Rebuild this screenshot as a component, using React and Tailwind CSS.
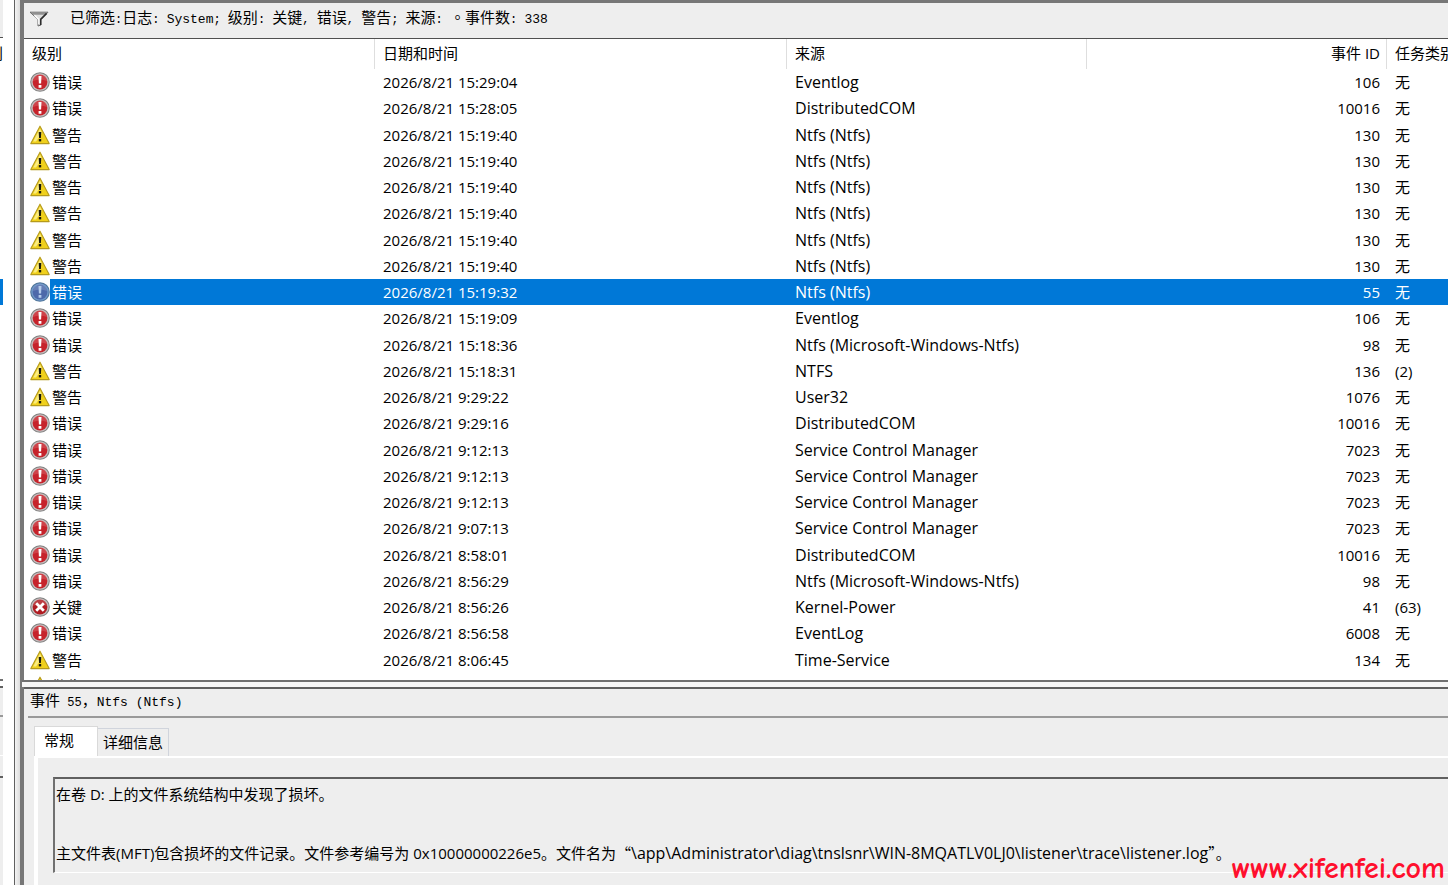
import React, { useState } from 'react';

const EVENTS = [
    ['error', '2026/8/21 15:29:04', 'Eventlog', '106', '无'],
    ['error', '2026/8/21 15:28:05', 'DistributedCOM', '10016', '无'],
    ['warning', '2026/8/21 15:19:40', 'Ntfs (Ntfs)', '130', '无'],
    ['warning', '2026/8/21 15:19:40', 'Ntfs (Ntfs)', '130', '无'],
    ['warning', '2026/8/21 15:19:40', 'Ntfs (Ntfs)', '130', '无'],
    ['warning', '2026/8/21 15:19:40', 'Ntfs (Ntfs)', '130', '无'],
    ['warning', '2026/8/21 15:19:40', 'Ntfs (Ntfs)', '130', '无'],
    ['warning', '2026/8/21 15:19:40', 'Ntfs (Ntfs)', '130', '无'],
    ['error', '2026/8/21 15:19:32', 'Ntfs (Ntfs)', '55', '无'],
    ['error', '2026/8/21 15:19:09', 'Eventlog', '106', '无'],
    ['error', '2026/8/21 15:18:36', 'Ntfs (Microsoft-Windows-Ntfs)', '98', '无'],
    ['warning', '2026/8/21 15:18:31', 'NTFS', '136', '(2)'],
    ['warning', '2026/8/21 9:29:22', 'User32', '1076', '无'],
    ['error', '2026/8/21 9:29:16', 'DistributedCOM', '10016', '无'],
    ['error', '2026/8/21 9:12:13', 'Service Control Manager', '7023', '无'],
    ['error', '2026/8/21 9:12:13', 'Service Control Manager', '7023', '无'],
    ['error', '2026/8/21 9:12:13', 'Service Control Manager', '7023', '无'],
    ['error', '2026/8/21 9:07:13', 'Service Control Manager', '7023', '无'],
    ['error', '2026/8/21 8:58:01', 'DistributedCOM', '10016', '无'],
    ['error', '2026/8/21 8:56:29', 'Ntfs (Microsoft-Windows-Ntfs)', '98', '无'],
    ['critical', '2026/8/21 8:56:26', 'Kernel-Power', '41', '(63)'],
    ['error', '2026/8/21 8:56:58', 'EventLog', '6008', '无'],
    ['warning', '2026/8/21 8:06:45', 'Time-Service', '134', '无'],
    ['warning', '2026/8/21 8:06:42', 'Time-Service', '134', '无'],
];

const LEVELS = { error: '错误', warning: '警告', critical: '关键' };

function LevelIcon({ level, selected }) {
    if (level === 'warning') {
        return (
            <svg viewBox="0 0 20 20" className="block size-5" aria-hidden="true">
                <path d="M10 1.2 19.2 18.6H.8Z" fill="#f0d01c" stroke="#b59a1c" strokeWidth="1.1" strokeLinejoin="round" />
                <path d="M10 3.4 12 8 6 16.6H3.2Z" fill="#fdf29a" opacity=".8" />
                <path d="M8.7 7h2.6l-.4 6H9.1z" fill="#1d1a08" />
                <rect x="8.8" y="14" width="2.4" height="2.4" fill="#1d1a08" />
            </svg>
        );
    }
    return (
        <svg viewBox="0 0 20 20" className="block size-5" aria-hidden="true">
            <circle cx="10" cy="10" r="9.8" fill={selected ? '#4e7397' : '#808080'} />
            <circle cx="10" cy="10" r="8.8" fill={selected ? '#6f98c8' : '#c4bcbc'} />
            <circle cx="10" cy="10" r="7.4" fill={selected ? '#4d69aa' : level === 'critical' ? '#b01c22' : '#c6232b'} />
            <path d="M3 9a7 7 0 0 1 14 0Q10 6 3 9Z" fill="#fff" opacity=".15" />
            {level === 'critical' ? (
                <path d="m6.2 6.2 7.6 7.6m0-7.6-7.6 7.6" stroke="#fff" strokeWidth="2.8" />
            ) : (
                <path d="M8.5 4h3l-.4 7.6H8.9zM8.6 13h2.8v2.8H8.6z" fill={selected ? '#b4cbea' : '#fff'} />
            )}
        </svg>
    );
}

function FunnelIcon() {
    return (
        <svg viewBox="0 0 20 16" className="h-4 w-5 shrink-0" aria-hidden="true">
            <path d="M1 1.2h18l-7 7.3V14l-3 1V8.5Z" fill="#dedede" stroke="#6a6a6a" strokeWidth="1" />
            <path d="M2.5 2h15l-1.6 1.8H4.2Z" fill="#909090" />
            <path d="M17.6 2.4 11.6 8.4V14" fill="none" stroke="#2c2c2c" strokeWidth="1.5" />
            <path d="M5.4 4.2 9.8 8.6v4.6" fill="none" stroke="#fff" strokeWidth="1.3" />
        </svg>
    );
}

// Latin runs sit on a half-width grid next to the Chinese text
function Mono({ children }) {
    return <span className="text-[13px]">{children}</span>;
}

function Sep({ children }) {
    return <span className="text-xs">{children}</span>;
}

function FilterBar() {
    return (
        <div className="flex h-[36px] shrink-0 items-center gap-[21px] border-b border-[#505050] bg-[#eeeeee] pb-1 pl-[5px]">
            <FunnelIcon />
            <p className="whitespace-pre font-['Liberation_Mono','Noto_Sans_CJK_SC',monospace] text-[15px] leading-5">
                已筛选<Sep>:</Sep>日志<Sep>: </Sep><Mono>System</Mono><Sep>; </Sep>级别<Sep>: </Sep>关键<Sep>, </Sep>错误<Sep>, </Sep>警告<Sep>; </Sep>来源<Sep>: </Sep>
                <span lang="zh-TW" className="font-['Noto_Sans_CJK_TC',sans-serif]">。</span>
                事件数<Sep>: </Sep><Mono>338</Mono>
            </p>
        </div>
    );
}

function EventTable({ selected, onSelect }) {
    const head = 'border-r border-[#dedede] p-0 pb-[2px] pl-2 font-normal';
    return (
        <div className="h-[641px] shrink-0 overflow-hidden bg-white">
            <table className="h-[660px] w-full table-fixed border-separate border-spacing-0 whitespace-nowrap text-left leading-6">
                <colgroup>
                    <col className="w-[26px]" />
                    <col className="w-[325px]" />
                    <col className="w-[412px]" />
                    <col className="w-[300px]" />
                    <col className="w-[300px]" />
                    <col />
                </colgroup>
                <thead>
                    <tr className="h-[30px]">
                        <th colSpan={2} className={head}>级别</th>
                        <th className={head}>日期和时间</th>
                        <th className={head}>来源</th>
                        <th className={`${head} pr-[6px] text-right`}>事件 ID</th>
                        <th className="overflow-hidden p-0 pb-[2px] pl-2 font-normal">任务类别</th>
                    </tr>
                </thead>
                <tbody>
                    {EVENTS.map(([level, time, source, id, task], i) => {
                        const active = i === selected;
                        const cell = active ? 'bg-[#0078d7] p-0 text-white' : 'p-0';
                        return (
                            <tr key={i} onClick={() => onSelect(i)}>
                                <td className="p-0 pl-[6px]">
                                    <LevelIcon level={level} selected={active} />
                                </td>
                                <td className={`${cell} pl-[2px]`}>{LEVELS[level]}</td>
                                <td className={`${cell} pl-2`}>{time}</td>
                                <td className={`${cell} pl-2 text-base leading-6`}>{source}</td>
                                <td className={`${cell} pr-[7px] text-right`}>{id}</td>
                                <td className={`${cell} pl-2`}>{task}</td>
                            </tr>
                        );
                    })}
                </tbody>
            </table>
        </div>
    );
}

function EventDetails() {
    const [tab, setTab] = useState('general');
    return (
        <section className="flex grow flex-col border-t-2 border-[#606060] bg-[#eeeeee]">
            <h2 className="ml-1 h-[29px] border-b-2 border-[#999999] pl-[2px] font-['Liberation_Mono','Noto_Sans_CJK_SC',monospace] text-[15px] leading-[27px]">
                事件<Sep> 55</Sep>，<Mono>Ntfs (Ntfs)</Mono>
            </h2>
            <div role="tablist" className="mt-2 ml-[10px] flex items-end">
                <button
                    role="tab"
                    aria-selected={tab === 'general'}
                    onClick={() => setTab('general')}
                    className="h-[30px] w-16 border border-b-0 border-[#d9d9d9] bg-white pr-[14px] pb-[2px]"
                >
                    常规
                </button>
                <button
                    role="tab"
                    aria-selected={tab === 'details'}
                    onClick={() => setTab('details')}
                    className="h-[28px] w-[71px] border border-b-0 border-l-0 border-[#d0d4dc] bg-[#eeeeee]"
                >
                    详细信息
                </button>
            </div>
            <div className="ml-[10px] flex grow flex-col border-t-2 border-l-4 border-white pt-[19px] pl-[15px]">
                <div className="h-[96px] border-t-2 border-b border-l-2 border-t-[#606060] border-b-white border-l-[#707070] pt-[1px] pl-[1px] whitespace-pre leading-[29px]">
                    <p>在卷 D: 上的文件系统结构中发现了损坏。</p>
                    <p className="mt-[29px]">
                        主文件表(MFT)包含损坏的文件记录。文件参考编号为 0x10000000226e5。文件名为
                        <span className="font-['Noto_Sans_CJK_SC',sans-serif]">“</span>
                        <span className="text-base leading-[29px]">\app\Administrator\diag\tnslsnr\WIN-8MQATLV0LJ0\listener\trace\listener.log</span>
                        <span className="font-['Noto_Sans_CJK_SC',sans-serif]">”。</span>
                    </p>
                </div>
            </div>
        </section>
    );
}

// Right edge of the neighbouring console pane
function SidePane() {
    return (
        <aside className="flex w-[3px] shrink-0 flex-col overflow-hidden bg-white">
            <div className="h-[38px] shrink-0 border-b border-[#505050] bg-[#eeeeee]" />
            <div className="flex h-[241px] shrink-0 justify-end pt-[3px] leading-6">别</div>
            <div className="h-[26px] shrink-0 bg-[#0078d7]" />
            <div className="h-[376px] shrink-0 border-b-2 border-[#707070]" />
            <div className="h-[5px] shrink-0 bg-white" />
            <div className="h-[31px] shrink-0 border-t-2 border-b-2 border-t-[#606060] border-b-[#999999] bg-[#eeeeee]" />
            <div className="h-[39px] shrink-0 border-b border-white bg-[#eeeeee]" />
            <div className="h-[22px] shrink-0 border-b-2 border-[#606060] bg-[#eeeeee]" />
            <div className="grow bg-[#eeeeee]" />
        </aside>
    );
}

export default function App() {
    const [selected, setSelected] = useState(8);

    return (
        <div className="relative flex h-screen overflow-hidden bg-white font-['Open_Sans','Noto_Sans_CJK_SC',sans-serif] text-[15px] text-black" lang="zh-CN">
            <SidePane />
            <div className="ml-[11px] w-[6px] shrink-0 border-l border-[#606060] bg-linear-to-r from-[#f4f4f4] to-[#dcdcdc]" />
            <main className="flex min-w-0 grow flex-col border-t-[3px] border-l-4 border-[#777777]">
                <FilterBar />
                <EventTable selected={selected} onSelect={setSelected} />
                <div className="-ml-[2px] h-[7px] shrink-0 border-t-2 border-[#707070] bg-[#f6f6f6]" />
                <EventDetails />
            </main>
            <a href="http://www.xifenfei.com" className="absolute right-[3px] bottom-0 font-['Comic_Sans_MS','Comic_Neue','Lato',sans-serif] text-[30px] leading-8 font-bold text-[#ff0f2d]">
                www.xifenfei.com
            </a>
        </div>
    );
}
